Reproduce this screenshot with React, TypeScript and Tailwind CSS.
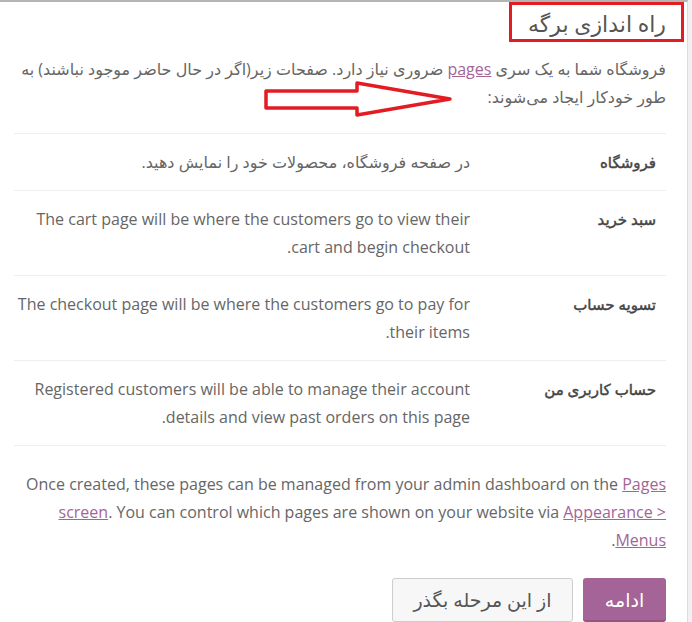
import React from "react";

const rows = [
  {
    title: "فروشگاه",
    desc: "در صفحه فروشگاه، محصولات خود را نمایش دهید.",
  },
  {
    title: "سبد خرید",
    desc: "The cart page will be where the customers go to view their cart and begin checkout.",
  },
  {
    title: "تسویه حساب",
    desc: "The checkout page will be where the customers go to pay for their items.",
  },
  {
    title: "حساب کاربری من",
    desc: "Registered customers will be able to manage their account details and view past orders on this page.",
  },
];

const font = { fontFamily: '"Open Sans", "DejaVu Sans", sans-serif' };

export default function App() {
  return (
    <div className="w-[692px] h-[622px] overflow-hidden bg-[#f1f1f1]" style={font}>
      <div
        dir="rtl"
        className="relative w-[688px] h-[622px] bg-white border-t-2 border-r border-[#b4b4b4] border-r-[#dcdcdc] pr-[21px] pl-[14px] text-[#666]"
      >
        <h1 className="pt-[5px] text-[22px] leading-[32px] font-normal text-[#555]">راه اندازی برگه</h1>

        <p className="mt-[16px] text-[16px] leading-[28px]">
          فروشگاه شما به یک سری{" "}
          <a className="text-[#a46497] underline">pages</a> ضروری نیاز دارد. صفحات زیر(اگر در حال حاضر
          موجود نباشند) به
          <br />
          طور خودکار ایجاد می‌شوند:
        </p>

        <div className="mt-[22px] border-t border-[#eee]">
          {rows.map((r) => (
            <div key={r.title} className="flex border-b border-[#eee] py-[14px]">
              <div className="w-[196px] shrink-0 pr-[10px] text-[15px] leading-[28px] text-[#444] [-webkit-text-stroke:0.45px_#444]">
                {r.title}
              </div>
              <div className="w-[456px] text-[16px] leading-[28px] text-[#666]">{r.desc}</div>
            </div>
          ))}
        </div>

        <p className="mt-[24px] text-[16px] leading-[28px]">
          Once created, these pages can be managed from your admin dashboard on the{" "}
          <a className="text-[#a46497] underline">Pages screen</a>. You can control which pages are shown
          on your website via <a className="text-[#a46497] underline">Appearance &gt; Menus</a>.
        </p>

        <div className="mt-[24px] flex gap-[10px]">
          <button className="h-[44px] w-[83px] rounded-[3px] bg-[#a46497] text-white text-[19px] shadow-[inset_0_-2px_0_rgba(0,0,0,0.12)]">
            ادامه
          </button>
          <button className="h-[44px] w-[181px] rounded-[3px] border border-[#ccc] bg-[#f7f7f7] text-[#555] text-[19px]">
            از این مرحله بگذر
          </button>
        </div>

        {/* highlight frame around the heading */}
        <div className="absolute top-0 left-[509px] w-[175px] h-[40px] border-[3px] border-[#e31b23]" />

        {/* pointer arrow */}
        <svg className="absolute left-[262px] top-[77px]" width="194" height="42" viewBox="0 0 194 42">
          <polygon
            points="4,12 95,12 95,4 188,20 95,36 95,29 4,29"
            fill="white"
            stroke="#e31b23"
            strokeWidth="3.5"
            strokeLinejoin="round"
          />
        </svg>
      </div>
    </div>
  );
}
